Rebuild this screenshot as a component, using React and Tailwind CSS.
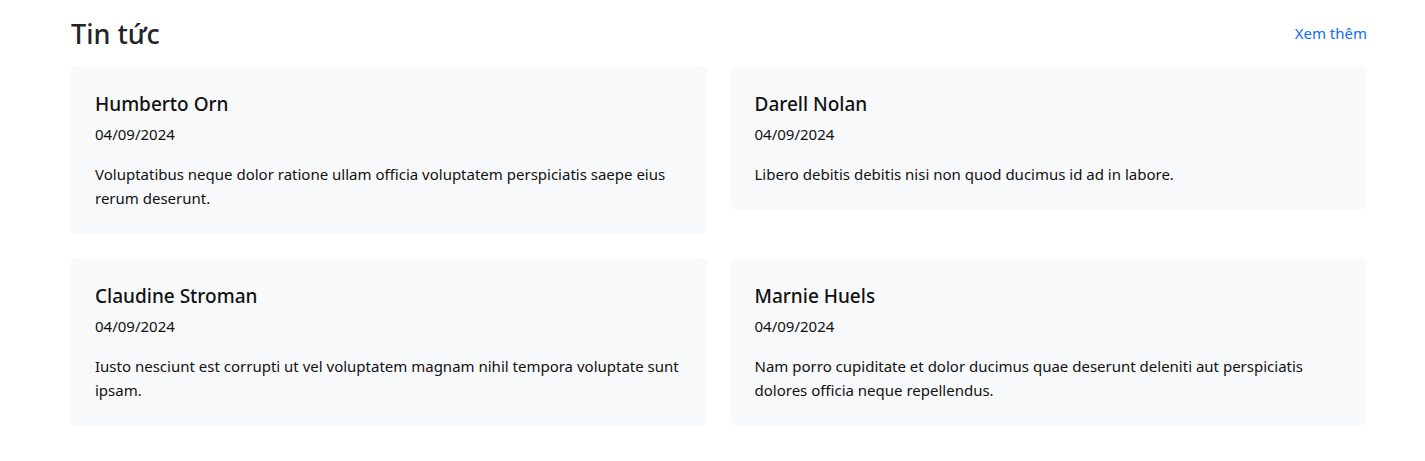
import React from "react";

const items = [
  { name: "Humberto Orn", date: "04/09/2024", text: "Voluptatibus neque dolor ratione ullam officia voluptatem perspiciatis saepe eius rerum deserunt." },
  { name: "Darell Nolan", date: "04/09/2024", text: "Libero debitis debitis nisi non quod ducimus id ad in labore." },
  { name: "Claudine Stroman", date: "04/09/2024", text: "Iusto nesciunt est corrupti ut vel voluptatem magnam nihil tempora voluptate sunt ipsam." },
  { name: "Marnie Huels", date: "04/09/2024", text: "Nam porro cupiditate et dolor ducimus quae deserunt deleniti aut perspiciatis dolores officia neque repellendus." },
];

export default function App() {
  return (
    <div className="min-h-[461px] bg-white text-[#212529]" style={{ fontFamily: '"Noto Sans", "Open Sans", sans-serif' }}>
      <div className="w-[1295px] ml-[71px] pt-[16px]">
        <div className="flex items-center justify-between h-[36px] mb-[14px]">
          <h3 className="text-[27px] font-medium leading-[36px] text-[#212529]">Tin tức</h3>
          <a className="text-[15px] text-[#0d6efd] leading-[24px] mb-[2px] mr-[-1px]">Xem thêm</a>
        </div>
        <div className="grid grid-cols-2 gap-x-[24px] gap-y-[24px] items-start">
          {items.map((it) => (
            <div key={it.name} className="bg-[#f8f9fa] rounded-[6px] p-[24px]">
              <h5 className="text-[19px] font-medium leading-[24px] pt-[2px] mb-[6px] text-[#111]">{it.name}</h5>
              <div className="text-[15px] leading-[24px] mb-[16px] text-[#111]">{it.date}</div>
              <p className="text-[15px] leading-[24px] text-[#111]">{it.text}</p>
            </div>
          ))}
        </div>
      </div>
    </div>
  );
}
